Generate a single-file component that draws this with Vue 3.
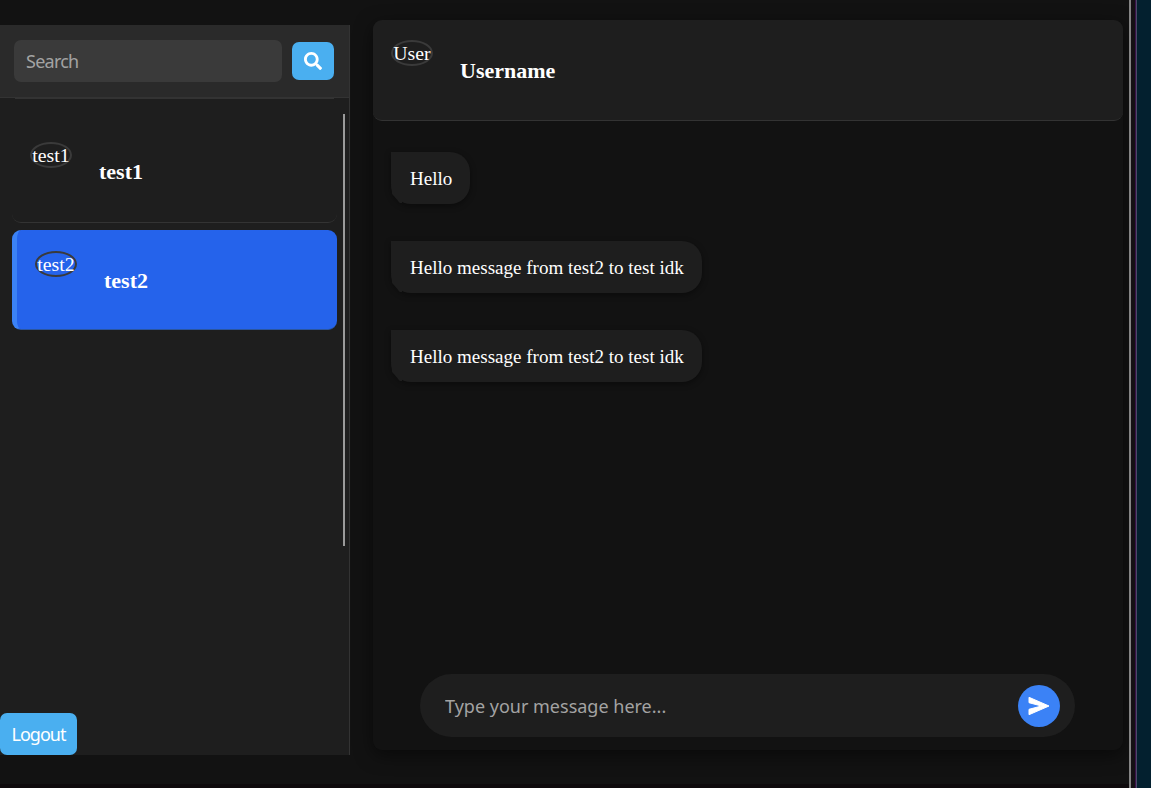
<template>
  <div class="page">
    <div class="chat-app">
      <aside class="sidebar">
        <form class="search" @submit.prevent>
          <input v-model="search" type="text" placeholder="Search" />
          <button class="search-btn" type="submit" aria-label="Search">
            <svg viewBox="0 0 512 512" width="18" height="18">
              <path fill="currentColor" d="M505 442.7 405.300 343c-4.500-4.500-10.600-7-17-7H372c27.600-35.300 44-79.700 44-128C416 93.100 322.900 0 208 0S0 93.100 0 208s93.100 208 208 208c48.300 0 92.700-16.400 128-44v16.300c0 6.400 2.500 12.500 7 17l99.700 99.700c9.400 9.400 24.600 9.400 33.900 0l28.300-28.300c9.400-9.400 9.400-24.600.1-34zM208 336c-70.700 0-128-57.200-128-128 0-70.700 57.200-128 128-128 70.700 0 128 57.200 128 128 0 70.700-57.200 128-128 128z" />
            </svg>
          </button>
        </form>

        <div class="contacts">
          <div class="contact-edge"></div>
          <div
            v-for="user in users"
            :key="user"
            class="contact"
            :class="{ active: user === selected }"
            @click="selected = user"
          >
            <span class="avatar">{{ user }}</span>
            <h3>{{ user }}</h3>
          </div>
          <div class="scroll-thumb"></div>
        </div>

        <button class="logout">Logout</button>
      </aside>

      <main class="chat">
        <header class="chat-header">
          <span class="avatar">User</span>
          <h3>Username</h3>
        </header>

        <div class="messages">
          <div v-for="(message, index) in messages" :key="index" class="message">{{ message }}</div>
        </div>

        <form class="composer" @submit.prevent="sendMessage">
          <input v-model="draft" type="text" placeholder="Type your message here..." />
          <button class="send-btn" type="submit" aria-label="Send">
            <svg viewBox="0 0 22 20" width="22" height="20">
              <path fill="currentColor" stroke="currentColor" stroke-width="1" stroke-linejoin="round" d="M1 1.300 21 10 1 18.700V13.300L13.500 10 1 6.700z" />
            </svg>
          </button>
        </form>
      </main>
    </div>
    <div class="page-scroll"></div>
    <div class="window-edge"></div>
    <div class="backdrop"></div>
  </div>
</template>

<script setup>
import { ref } from "vue";

const search = ref("");
const draft = ref("");
const users = ["test1", "test2"];
const selected = ref("test2");

const messages = ref([
  "Hello",
  "Hello message from test2 to test idk",
  "Hello message from test2 to test idk",
]);

function sendMessage() {
  if (!draft.value.trim()) return;
  messages.value.push(draft.value);
  draft.value = "";
}
</script>

<style>
body {
  background: #121212;
  overflow: hidden;
}
</style>

<style scoped>
* {
  box-sizing: border-box;
}
.page {
  display: flex;
  height: 788px;
  color: #fff;
  font-family: "Liberation Serif", serif;
  font-size: 19.05px;
}
input,
button {
  border: 0;
  outline: 0;
  font-family: "Noto Sans", sans-serif;
  font-size: 18px;
  color: #fff;
}
input::placeholder {
  color: #a3a3a3;
  opacity: 1;
}
button {
  cursor: pointer;
}
h3 {
  margin: 0;
  font-size: 22px;
  line-height: 26px;
}
.chat-app {
  display: flex;
  gap: 23px;
  width: 1129px;
  padding: 20px 6px 33px 0;
  border-bottom: 4px solid #0e0a0c;
}
.sidebar {
  display: flex;
  flex-direction: column;
  width: 350px;
  height: 730px;
  margin-top: 5px;
  background: #1e1e1e;
  border-right: 1px solid #333;
}
.search {
  display: flex;
  align-items: center;
  gap: 10px;
  height: 73px;
  padding: 0 15px 1px 14px;
  background: #2a2a2a;
  border-bottom: 1px solid #333;
}
.search input {
  flex: 1;
  min-width: 0;
  height: 42px;
  padding: 0 12px;
  background: #3a3a3a;
  border-radius: 7px;
  letter-spacing: -0.75px;
}
.search-btn {
  display: flex;
  align-items: center;
  justify-content: center;
  width: 42px;
  height: 38px;
  padding: 0;
  background: #4aaff0;
  border-radius: 7px;
}
.contacts {
  position: relative;
  flex: 1;
  padding: 0 12px;
}
.contact-edge {
  height: 1px;
  margin: 0 3px 23px;
  background: #333;
}
.contact {
  display: flex;
  align-items: flex-start;
  height: 101px;
  margin-bottom: 7px;
  padding: 20px 18px;
  border-bottom: 1px solid #333;
  border-radius: 9px;
}
.contact h3 {
  margin: 17px 0 0 27px;
}
.chat-header h3 {
  margin: 18px 0 0 27px;
}
.contact.active {
  height: 100px;
  padding-top: 21px;
  background: #2563eb;
  border-left: 5px solid #3b82f6;
  border-bottom-color: #2b569f;
}
.avatar {
  flex: none;
  height: 26px;
  width: 42px;
  border: 2px solid #3a3a3a;
  border-radius: 50%;
  font-size: 19.8px;
  line-height: 22px;
  text-align: center;
}
.scroll-thumb {
  position: absolute;
  top: 16px;
  right: 4px;
  width: 2px;
  height: 432px;
  background: #9a9a9a;
}
.logout {
  width: 77px;
  height: 42px;
  padding: 0;
  background: #4aaff0;
  border-radius: 7px;
  letter-spacing: -1px;
}
.chat {
  display: flex;
  flex-direction: column;
  width: 750px;
  height: 730px;
  border-radius: 9px;
  background: #121212;
  box-shadow: 0 5px 18px rgba(0, 0, 0, 0.5);
}
.chat-header {
  display: flex;
  align-items: flex-start;
  height: 101px;
  padding: 20px 18px;
  background: #1e1e1e;
  border-bottom: 1px solid #333;
  border-radius: 9px;
}
.messages {
  flex: 1;
  display: flex;
  flex-direction: column;
  align-items: flex-start;
  gap: 37px;
  padding: 31px 18px;
}
.message {
  position: relative;
  height: 52px;
  padding: 0 18px 0 19px;
  line-height: 53px;
  background: #1e1e1e;
  border-radius: 0 20px 20px 20px;
  box-shadow: 0 2px 6px rgba(0, 0, 0, 0.4);
}
/* small tail under the left corner of the bubble */
.message::after {
  content: "";
  position: absolute;
  left: 0;
  bottom: 1px;
  width: 11px;
  height: 18px;
  background: #1e1e1e;
  clip-path: polygon(0 0, 100% 0, 100% 100%, 80% 100%, 10% 50%);
}
.composer {
  display: flex;
  align-items: center;
  height: 63px;
  margin: 0 48px 13px 47px;
  padding: 0 15px 0 25px;
  background: #1e1e1e;
  border-radius: 32px;
}
.composer input {
  flex: 1;
  min-width: 0;
  padding: 0;
  background: transparent;
}
.send-btn {
  display: flex;
  align-items: center;
  justify-content: center;
  width: 42px;
  height: 42px;
  padding: 0;
  background: #3b82f6;
  border-radius: 50%;
}
.page-scroll {
  width: 2px;
  background: #858585;
}
.window-edge {
  width: 6px;
  background: #141014;
  border-right: 1px solid #4b4a68;
  box-shadow: inset -1px 0 #3a1248;
}
.backdrop {
  flex: 1;
  background: #03202f;
}
</style>
